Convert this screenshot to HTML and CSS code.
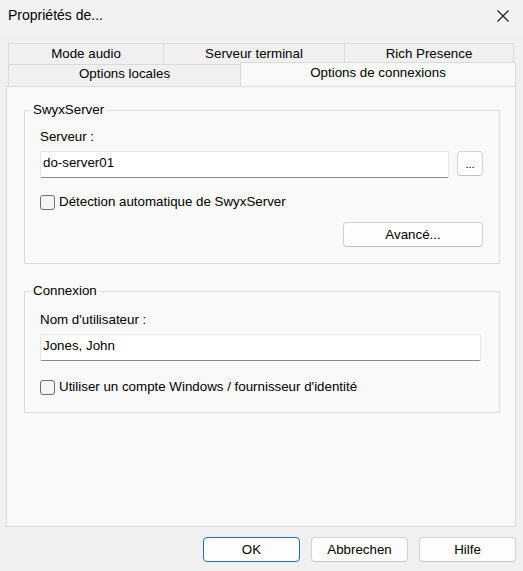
FILE: index.html
```html
<!DOCTYPE html>
<html lang="fr">
<head>
<meta charset="utf-8">
<title>Propriétés de...</title>
<link rel="stylesheet" href="styles.css">
</head>
<body>
<div class="window">
  <header class="titlebar">
    <span class="title">Propriétés de...</span>
    <svg class="close" width="12" height="12" viewBox="0 0 12 12" aria-label="Fermer">
      <path d="M0.5 0.5 L11.5 11.5 M11.5 0.5 L0.5 11.5" stroke="#1a1a1a" stroke-width="1.1" fill="none"/>
    </svg>
  </header>

  <nav class="tabs">
    <div class="tab-row">
      <div class="tab tab-audio">Mode audio</div>
      <div class="tab tab-terminal">Serveur terminal</div>
      <div class="tab tab-presence">Rich Presence</div>
    </div>
    <div class="tab-row">
      <div class="tab tab-locales">Options locales</div>
      <div class="tab tab-active">Options de connexions</div>
    </div>
  </nav>

  <main class="panel">
    <fieldset class="group group-server">
      <legend>SwyxServer</legend>
      <div class="group-body">
        <div class="label">Serveur :</div>
        <div class="field-row">
          <input class="textbox" type="text" value="do-server01">
          <button class="btn btn-browse">...</button>
        </div>
        <label class="check"><span class="box"></span><span class="check-text">Détection automatique de SwyxServer</span></label>
        <div class="actions">
          <button class="btn btn-advanced">Avancé...</button>
        </div>
      </div>
    </fieldset>

    <fieldset class="group group-login">
      <legend>Connexion</legend>
      <div class="group-body">
        <div class="label">Nom d'utilisateur :</div>
        <div class="field-row">
          <input class="textbox textbox-user" type="text" value="Jones, John">
        </div>
        <label class="check check-login"><span class="box"></span><span class="check-text">Utiliser un compte Windows / fournisseur d'identité</span></label>
      </div>
    </fieldset>
  </main>

  <footer class="footer">
    <button class="btn btn-dialog btn-default">OK</button>
    <button class="btn btn-dialog">Abbrechen</button>
    <button class="btn btn-dialog">Hilfe</button>
  </footer>
</div>
</body>
</html>
```

FILE: styles.css
```css
* {
  box-sizing: border-box;
}

html, body {
  margin: 0;
  padding: 0;
}

body {
  width: 523px;
  height: 571px;
  overflow: hidden;
  background: #f0f0f0;
  font-family: "Liberation Sans", Arial, sans-serif;
  font-size: 13.33px;
  line-height: 16px;
  color: #000;
}

.window {
  width: 523px;
  height: 571px;
  display: flex;
  flex-direction: column;
}

/* Title bar */
.titlebar {
  height: 33px;
  flex: none;
  background: #f3f3f3;
  display: flex;
  align-items: flex-start;
  justify-content: space-between;
  padding: 7px 14px 0 8px;
}

.title {
  font-size: 14px;
  line-height: 16px;
}

.close {
  display: block;
  margin-top: 3px;
}

/* Tabs */
.tabs {
  margin-top: 10px;
  padding-left: 8px;
  flex: none;
}

.tab-row {
  display: flex;
}

.tab {
  height: 21px;
  border: 1px solid #dadada;
  border-bottom: 0;
  background: #f0f0f0;
  text-align: center;
  padding-top: 2px;
  white-space: nowrap;
}

.tab + .tab {
  margin-left: -1px;
}

.tab-audio { width: 156px; }
.tab-terminal { width: 182px; }
.tab-presence { width: 170px; }

.tab-locales {
  width: 233px;
  padding-top: 1px;
}

.tab-active {
  position: relative;
  z-index: 1;
  width: 276px;
  height: 24px;
  margin-top: -2px;
  background: #f9f9f9;
  padding-top: 2px;
}

/* Panel */
.panel {
  margin-left: 6px;
  width: 510px;
  height: 441px;
  flex: none;
  background: #f9f9f9;
  border: 1px solid #dadada;
  padding: 15px 15px 0 17px;
}

.group {
  margin: 0;
  padding: 0 16px 16px 15px;
  border: 1px solid #dcdcdc;
  min-inline-size: 0;
}

.group legend {
  margin-left: -9px;
  padding: 0 2px;
  line-height: 16px;
}

.group-login {
  margin-top: 19px;
  padding-bottom: 17px;
}

.label {
  margin-top: 11px;
}

.group-login .label {
  margin-top: 13px;
}

.field-row {
  display: flex;
  gap: 8px;
  margin-top: 6px;
}

.textbox {
  flex: 1;
  min-width: 0;
  height: 27px;
  margin: 0;
  padding: 2px 2px 7px 2px;
  font: inherit;
  line-height: 16px;
  color: #000;
  background: #fff;
  border: 1px solid #e6e6e6;
  border-bottom-color: #8a8a8a;
  border-radius: 2px;
  outline: none;
}

.textbox-user {
  margin-right: 2px;
}

.btn {
  font: inherit;
  color: #000;
  background: #fdfdfd;
  border: 1px solid #d2d2d2;
  border-bottom-color: #c2c2c2;
  border-radius: 4px;
  margin: 0;
  padding: 0;
  height: 25px;
  line-height: 16px;
}

.btn-browse {
  width: 26px;
  flex: none;
  font-size: 11px;
}

.check {
  display: flex;
  align-items: center;
  gap: 4px;
  margin-top: 16px;
  height: 16px;
}

.check-login {
  margin-top: 18px;
}

.box {
  width: 15px;
  height: 15px;
  flex: none;
  border: 1px solid #6e6e6e;
  border-radius: 3px;
  background: #f5f5f5;
}

.check-text {
  white-space: nowrap;
}

.actions {
  display: flex;
  justify-content: flex-end;
  margin-top: 12px;
}

.btn-advanced {
  width: 140px;
}

/* Footer buttons */
.footer {
  margin-top: 10px;
  display: flex;
  justify-content: flex-end;
  gap: 11px;
  padding-right: 7px;
}

.btn-dialog {
  width: 97px;
}

.btn-default {
  border-color: #1f6fc0;
}
```
